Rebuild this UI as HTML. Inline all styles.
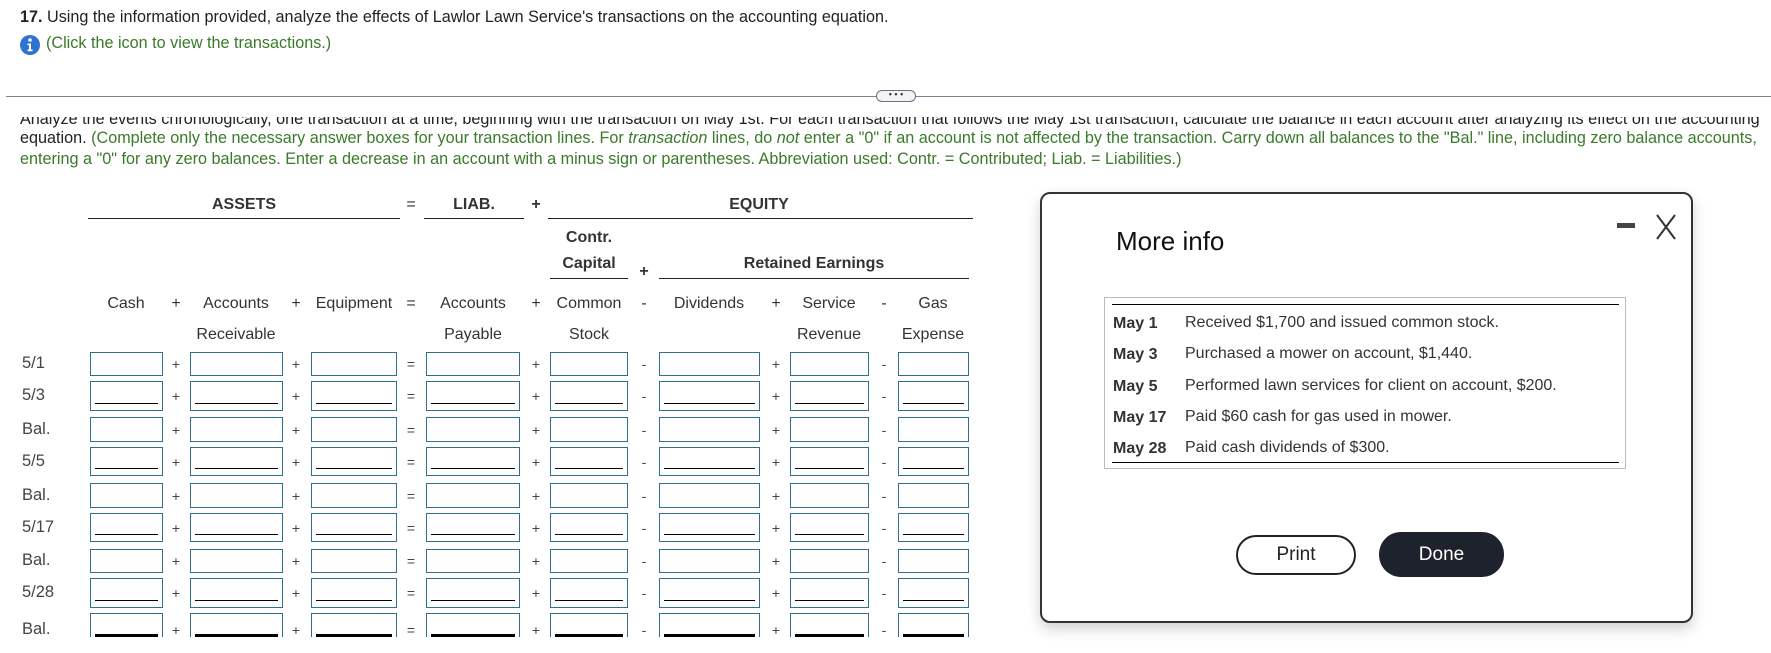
<!DOCTYPE html>
<html><head><meta charset="utf-8"><style>
body{margin:0;width:1771px;height:653px;overflow:hidden;background:#fff;font-family:"Liberation Sans",Arial,sans-serif;color:#333;position:relative}
.a{position:absolute;white-space:nowrap}
.b{font-weight:bold}
.g{color:#3a7a2a}
.c{transform:translateX(-50%)}
.box{position:absolute;border:1.5px solid #2f6f8f;box-sizing:border-box;background:#fff}
.box i{position:absolute;left:4px;right:4px;bottom:6px;border-top:1px solid #000}
.hl{position:absolute;height:0;border-top:1.5px solid #222}
#tbl{position:absolute;left:0;top:340px;width:1000px;height:297px;overflow:hidden}
</style></head><body>
<div class="a" style="left:20px;top:8px;font-size:16.2px;color:#222"><b>17.</b> Using the information provided, analyze the effects of Lawlor Lawn Service's transactions on the accounting equation.</div>
<svg class="a" style="left:20px;top:35px" width="20" height="20" viewBox="0 0 20 20"><circle cx="10" cy="10" r="10" fill="#2f73d0"/><circle cx="10" cy="5" r="1.8" fill="#fff"/><path d="M7.5 8.5h3.5v6h1.5v1.8h-5v-1.8h1.5v-4.2h-1.5z" fill="#fff"/></svg>
<div class="a g" style="left:46px;top:34px;font-size:16.2px">(Click the icon to view the transactions.)</div>
<div class="hl" style="left:6px;width:1765px;top:96px;border-top:1px solid #7a8290"></div>
<div class="a" style="left:876px;top:90px;width:40px;height:12px;border:1px solid #6a7280;border-radius:7px;background:#f3f4f6;box-sizing:border-box;text-align:center;font-size:9px;line-height:6px;color:#444;font-weight:bold">• • •</div>
<div class="a" style="left:20px;top:117px;font-size:16.2px;line-height:20.5px;color:#222;height:62px;overflow:hidden;white-space:normal;width:1750px">
<div style="height:12px;overflow:hidden;position:relative"><div style="position:relative;top:-8px;white-space:nowrap">Analyze the events chronologically, one transaction at a time, beginning with the transaction on May 1st. For each transaction that follows the May 1st transaction, calculate the balance in each account after analyzing its effect on the accounting</div></div>
<div style="margin-top:-1px;white-space:nowrap">equation. <span class="g">(Complete only the necessary answer boxes for your transaction lines. For <i>transaction</i> lines, do <i>not</i> enter a "0" if an account is not affected by the transaction. Carry down all balances to the "Bal." line, including zero balance accounts,</span></div>
<div class="g" style="white-space:nowrap">entering a "0" for any zero balances. Enter a decrease in an account with a minus sign or parentheses. Abbreviation used: Contr. = Contributed; Liab. = Liabilities.)</div>
</div>

<div class="a b c" style="left:244px;top:196px;font-size:16px">ASSETS</div>
<div class="a c" style="left:411px;top:196px;font-size:16px">=</div>
<div class="a b c" style="left:474px;top:196px;font-size:16px">LIAB.</div>
<div class="a b c" style="left:536px;top:196px;font-size:16px">+</div>
<div class="a b c" style="left:759px;top:196px;font-size:16px">EQUITY</div>
<div class="hl" style="left:88px;width:312px;top:218px"></div>
<div class="hl" style="left:424px;width:100px;top:218px"></div>
<div class="hl" style="left:548px;width:425px;top:218px"></div>
<div class="a b c" style="left:589px;top:229px;font-size:16px">Contr.</div>
<div class="a b c" style="left:589px;top:255px;font-size:16px">Capital</div>
<div class="a b c" style="left:644px;top:263px;font-size:16px">+</div>
<div class="a b c" style="left:814px;top:255px;font-size:16px">Retained Earnings</div>
<div class="hl" style="left:550px;width:78px;top:278px"></div>
<div class="hl" style="left:659px;width:310px;top:278px"></div>
<div id="hdr"></div>
<div id="tbl"></div>

<div class="a" style="left:1040px;top:192px;width:653px;height:431px;border:2px solid #333;border-radius:10px;box-sizing:border-box;box-shadow:0 6px 14px rgba(0,0,0,.18);background:#fff"></div>
<div class="a" style="left:1116px;top:226px;font-size:26px;color:#111">More info</div>
<div class="a" style="left:1617px;top:223px;width:18px;height:5px;background:#444"></div>
<svg class="a" style="left:1655px;top:213px" width="22" height="28"><path d="M2 2L20 26M20 2L2 26" stroke="#333" stroke-width="2"/></svg>
<div class="a" style="left:1104px;top:297px;width:522px;height:172px;border:1px solid #bbb;box-sizing:border-box"></div>
<div class="hl" style="left:1112px;width:507px;top:304px;border-top:1px solid #000"></div>
<div class="hl" style="left:1112px;width:507px;top:462px;border-top:1px solid #000"></div>
<div id="mi"></div>
<div class="a" style="left:1236px;top:535px;width:120px;height:40px;border:2px solid #222;border-radius:20px;box-sizing:border-box;text-align:center;line-height:36px;font-size:19px;color:#222">Print</div>
<div class="a" style="left:1379px;top:532px;width:125px;height:45px;background:#1e222c;border-radius:22px;text-align:center;line-height:45px;font-size:19px;color:#fff">Done</div>
<script>
var H=document.getElementById('hdr'),s='';
function t(x,y,txt){s+='<div class="a c" style="left:'+x+'px;top:'+y+'px;font-size:16px">'+txt+'</div>';}
var cols=[[90,163],[190,283],[311,397],[426,520],[550,628],[659,760],[790,869],[898,969]];
var ops=['+','+','=','+','-','+','-'];
var opx=[176,296,411,536,644,776,884];
t(126,295,'Cash');t(176,295,'+');t(236,295,'Accounts');t(296,295,'+');t(354,295,'Equipment');t(411,295,'=');t(473,295,'Accounts');t(536,295,'+');t(589,295,'Common');t(644,295,'-');t(709,295,'Dividends');t(776,295,'+');t(829,295,'Service');t(884,295,'-');t(933,295,'Gas');
t(236,326,'Receivable');t(473,326,'Payable');t(589,326,'Stock');t(829,326,'Revenue');t(933,326,'Expense');
H.innerHTML=s;
var rows=[['5/1',352,24,0],['5/3',381,30,1],['Bal.',417,25,0],['5/5',447,29,1],['Bal.',483,25,0],['5/17',513,29,1],['Bal.',549,24,0],['5/28',578,30,1],['Bal.',613,34,2]];
var T=document.getElementById('tbl');s='';
rows.forEach(function(r){var y=r[1]-340,h=r[2],cy=y+h/2;
s+='<div class="a" style="left:22px;top:'+(cy-10)+'px;font-size:16.5px;color:#444">'+r[0]+'</div>';
cols.forEach(function(c,i){s+='<div class="box" style="left:'+c[0]+'px;top:'+y+'px;width:'+(c[1]-c[0])+'px;height:'+h+'px">'+(r[3]?'<i style="'+(r[3]==2?'border-top-width:3px;bottom:auto;top:20px':'')+'"></i>':'')+'</div>';
if(i<7)s+='<div class="a c" style="left:'+opx[i]+'px;top:'+(cy-8)+'px;font-size:14px;color:#444">'+ops[i]+'</div>';});});
T.innerHTML=s;
var M=document.getElementById('mi');s='';
[['May 1','Received $1,700 and issued common stock.'],['May 3','Purchased a mower on account, $1,440.'],['May 5','Performed lawn services for client on account, $200.'],['May 17','Paid $60 cash for gas used in mower.'],['May 28','Paid cash dividends of $300.']].forEach(function(m,i){var y=315+i*31.3;
s+='<div class="a b" style="left:1113px;top:'+y+'px;font-size:16px;color:#333">'+m[0]+'</div><div class="a" style="left:1185px;top:'+(y-1)+'px;font-size:16px;color:#333">'+m[1]+'</div>';});
M.innerHTML=s;
</script>
</body></html>
